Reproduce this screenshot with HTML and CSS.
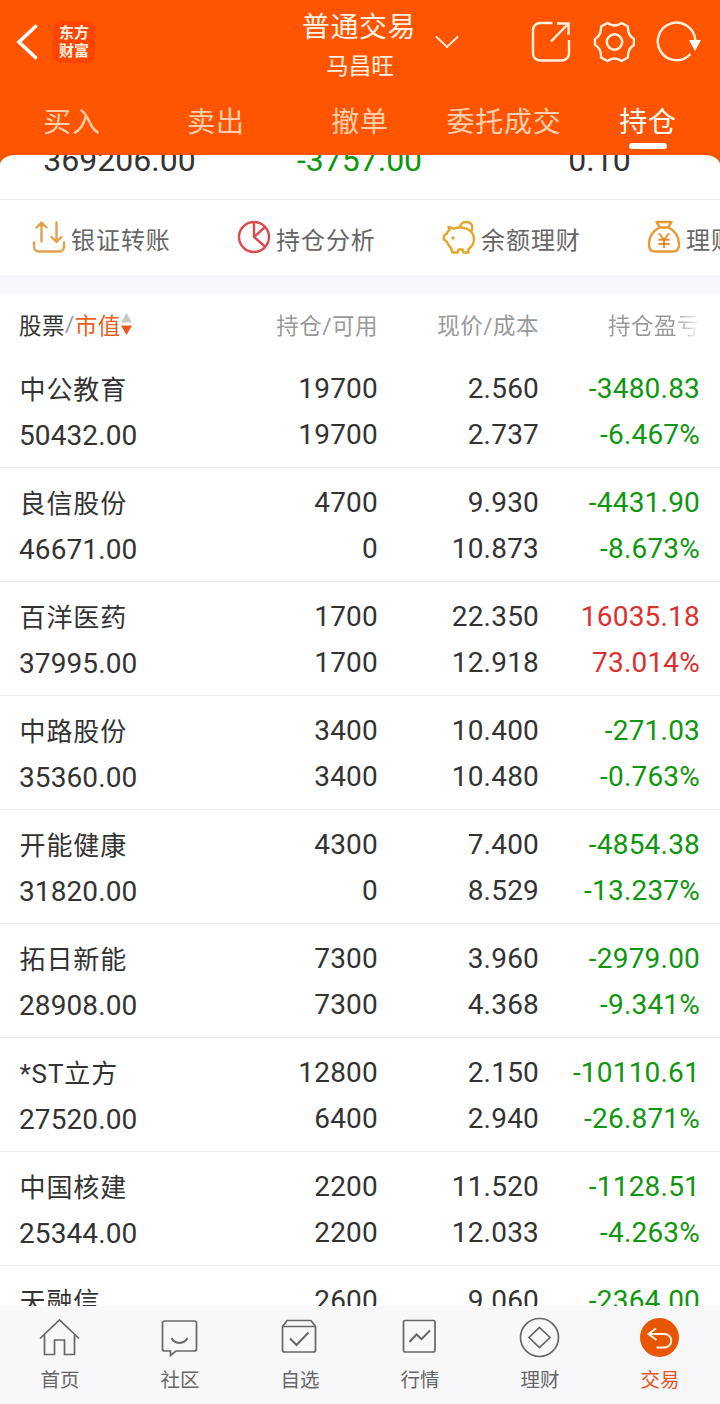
FILE: index.html
```
<!DOCTYPE html>
<html lang="zh-CN">
<head>
    <meta charset="UTF-8">
    <meta name="viewport" content="width=device-width, initial-scale=1.0">
    <title>普通交易 - 持仓</title>
    <link rel="stylesheet" href="styles.css">
</head>
<body>
<div class="app">

    <header class="header">
        <div class="topbar">
            <div class="topbar-left">
                <svg class="back" width="22" height="36" viewBox="0 0 22 36"><path d="M19.500 2.500L3 18l16.500 15.500" fill="none" stroke="#fff" stroke-width="3.600" stroke-linecap="round"/></svg>
                <div class="logo">东方<br>财富</div>
            </div>
            <div class="account">
                <div class="account-type">普通交易</div>
                <div class="account-name">马昌旺</div>
            </div>
            <div class="topbar-right">
                <svg class="arrow-down" width="24" height="14" viewBox="0 0 24 14"><path d="M1 1.500l11 10.500L23 1.500" fill="none" stroke="#fff0e0" stroke-width="1.800"/></svg>
                <div class="tools">
                    <svg width="42" height="42" viewBox="0 0 42 42" fill="none" stroke="#fff3e4" stroke-width="2.400">
                        <path d="M22.500 2H10a7 7 0 0 0-7 7v23.500a7 7 0 0 0 7 7h22a7 7 0 0 0 7-7V19"/>
                        <path d="M21 20.500L37.500 3.500M27 2.500h11.500v11.500"/>
                    </svg>
                    <svg width="42" height="42" viewBox="0 0 42 42" fill="none" stroke="#fff3e4" stroke-width="2.400" stroke-linejoin="round">
                        <path d="M14.500 2Q21.500 7 28.500 2L35 5.500Q34.500 14.500 41 18V24Q34.500 27.500 35 36.500L28.500 40Q21.500 35 14.500 40L8 36.500Q8.500 27.500 2 24V18Q8.500 14.500 8 5.500Z"/>
                        <circle cx="21.500" cy="21" r="7.700"/>
                    </svg>
                    <svg width="46" height="42" viewBox="0 0 46 42" fill="none">
                        <path d="M34.500 33A18.800 18.800 0 1 1 39.300 19" stroke="#fff3e4" stroke-width="2.400"/>
                        <path d="M33 19h12l-6 11z" fill="#fff"/>
                    </svg>
                </div>
            </div>
        </div>
        <nav class="tabs">
            <a class="tab">买入</a>
            <a class="tab">卖出</a>
            <a class="tab">撤单</a>
            <a class="tab">委托成交</a>
            <a class="tab active">持仓</a>
        </nav>
    </header>

    <main class="content">
        <div class="sheet">
            <section class="summary">
                <span>369206.00</span>
                <span class="down">-3757.00</span>
                <span>0.10</span>
            </section>

            <section class="shortcuts">
                <div class="shortcut">
                    <svg width="34" height="34" viewBox="0 0 34 34" fill="none" stroke="#e3a04a" stroke-width="2.400" stroke-linecap="round" stroke-linejoin="round">
                        <path d="M9.500 21.500V3M4.500 7.500L9.500 2.500l5 5M24.500 2.500v19M19.500 17l5 5 5-5"/>
                        <path d="M2 22.500v4a5 5 0 0 0 5 5h20a5 5 0 0 0 5-5v-4"/>
                    </svg>
                    <span>银证转账</span>
                </div>
                <div class="shortcut">
                    <svg width="34" height="34" viewBox="0 0 34 34" fill="none" stroke="#d84c50" stroke-width="2.400">
                        <circle cx="17" cy="17" r="15"/>
                        <path d="M17 2v15l11 9.500M17 17L28 7"/>
                    </svg>
                    <span>持仓分析</span>
                </div>
                <div class="shortcut">
                    <svg width="34" height="34" viewBox="0 0 34 34" fill="none" stroke="#e2a52b" stroke-width="2.400" stroke-linejoin="round">
                        <path d="M6.500 7l5 1.700c4-1.200 10-1.500 14 .3 4 2.300 6.500 6 6.500 10 0 4-2 7.500-5.500 10v3.500h-5l-1-3h-4l-1 3h-5l-1.500-4.500C7 26 5.500 23.500 4.500 21.500L2 19.500v-4L4.500 14c.5-1.500 1.500-3 3-4z"/>
                        <path d="M18 7.500c.5-7 11-7.500 12.300-.5.400 2-.3 3.500-1.300 4.500"/>
                        <circle cx="11" cy="18" r="1.700" fill="#e2a52b" stroke="none"/>
                    </svg>
                    <span>余额理财</span>
                </div>
                <div class="shortcut">
                    <svg width="34" height="34" viewBox="0 0 34 34" fill="none" stroke="#e69a35" stroke-width="2.400" stroke-linejoin="round">
                        <path d="M9.500 2h15l-3.500 5.500h-8z"/>
                        <path d="M12.500 7.500C5.500 11 2 17 2 24.500 2 29.500 4 31.500 8 31.500h18c4 0 6-2 6-7C32 17 28.500 11 21.500 7.500"/>
                        <path d="M12 13.500l5 6 5-6M17 19.500v8.500M11.500 19.800h11M11.500 24h11" stroke="#e88928" stroke-width="1.900"/>
                    </svg>
                    <span>理财</span>
                </div>
            </section>
        </div>

        <section class="positions">
            <div class="table-head">
                <div class="sort">
                    <span>股票</span><i>/</i><span class="sort-on">市值</span>
                    <svg width="11" height="22" viewBox="0 0 11 22"><path d="M5.500 0L11 9.500H0z" fill="#c8c8c8"/><path d="M0 12.500h11L5.500 22z" fill="#ea5a1a"/></svg>
                </div>
                <div>持仓/可用</div>
                <div>现价/成本</div>
                <div><span class="fade">持仓盈亏</span></div>
            </div>

            <div class="row">
                <div class="stock"><b>中公教育</b><span>50432.00</span></div>
                <div><span>19700</span><span>19700</span></div>
                <div><span>2.560</span><span>2.737</span></div>
                <div class="down"><span>-3480.83</span><span>-6.467%</span></div>
            </div>
            <div class="row">
                <div class="stock"><b>良信股份</b><span>46671.00</span></div>
                <div><span>4700</span><span>0</span></div>
                <div><span>9.930</span><span>10.873</span></div>
                <div class="down"><span>-4431.90</span><span>-8.673%</span></div>
            </div>
            <div class="row">
                <div class="stock"><b>百洋医药</b><span>37995.00</span></div>
                <div><span>1700</span><span>1700</span></div>
                <div><span>22.350</span><span>12.918</span></div>
                <div class="up"><span>16035.18</span><span>73.014%</span></div>
            </div>
            <div class="row">
                <div class="stock"><b>中路股份</b><span>35360.00</span></div>
                <div><span>3400</span><span>3400</span></div>
                <div><span>10.400</span><span>10.480</span></div>
                <div class="down"><span>-271.03</span><span>-0.763%</span></div>
            </div>
            <div class="row">
                <div class="stock"><b>开能健康</b><span>31820.00</span></div>
                <div><span>4300</span><span>0</span></div>
                <div><span>7.400</span><span>8.529</span></div>
                <div class="down"><span>-4854.38</span><span>-13.237%</span></div>
            </div>
            <div class="row">
                <div class="stock"><b>拓日新能</b><span>28908.00</span></div>
                <div><span>7300</span><span>7300</span></div>
                <div><span>3.960</span><span>4.368</span></div>
                <div class="down"><span>-2979.00</span><span>-9.341%</span></div>
            </div>
            <div class="row">
                <div class="stock"><b>*ST立方</b><span>27520.00</span></div>
                <div><span>12800</span><span>6400</span></div>
                <div><span>2.150</span><span>2.940</span></div>
                <div class="down"><span>-10110.61</span><span>-26.871%</span></div>
            </div>
            <div class="row">
                <div class="stock"><b>中国核建</b><span>25344.00</span></div>
                <div><span>2200</span><span>2200</span></div>
                <div><span>11.520</span><span>12.033</span></div>
                <div class="down"><span>-1128.51</span><span>-4.263%</span></div>
            </div>
            <div class="row">
                <div class="stock"><b>天融信</b></div>
                <div><span>2600</span></div>
                <div><span>9.060</span></div>
                <div class="down"><span>-2364.00</span></div>
            </div>
        </section>
    </main>

    <footer class="navbar">
        <a class="nav-item">
            <svg width="42" height="42" viewBox="0 0 42 42"><path d="M1 21.500L20.500 3 40 21.500M5.500 18v19.500h10v-14.500h10v14.500h10V18"/></svg>
            <span>首页</span>
        </a>
        <a class="nav-item">
            <svg width="42" height="42" viewBox="0 0 42 42"><path d="M5.500 4h30a2 2 0 0 1 2 2v26a2 2 0 0 1-2 2H17l-5.500 4.500V34H5.500a2 2 0 0 1-2-2V6a2 2 0 0 1 2-2z"/><path d="M12.500 21c3.500 6.500 12.500 6.500 16 0" stroke-width="2"/></svg>
            <span>社区</span>
        </a>
        <a class="nav-item">
            <svg width="42" height="42" viewBox="0 0 42 42"><path d="M3.500 9.500L8 3.500h24L36.500 9.500V33a2 2 0 0 1-2 2H5.500a2 2 0 0 1-2-2zM3.500 9.500h33"/><path d="M11 21.500l6.500 6.500 12-12.500" stroke-width="2"/></svg>
            <span>自选</span>
        </a>
        <a class="nav-item">
            <svg width="42" height="42" viewBox="0 0 42 42"><rect x="4.500" y="3.500" width="31.500" height="31.500" rx="1.500"/><path d="M10.500 25l7-7.500 5 4.500 8.500-8.500" stroke-width="2"/></svg>
            <span>行情</span>
        </a>
        <a class="nav-item">
            <svg width="42" height="42" viewBox="0 0 42 42"><circle cx="20.500" cy="20.500" r="19"/><path d="M20.500 10.500l10.500 10-10.500 10-10.500-10z"/></svg>
            <span>理财</span>
        </a>
        <a class="nav-item current">
            <svg width="42" height="42" viewBox="0 0 42 42"><circle cx="20.500" cy="20.500" r="19.500" fill="#e85600" stroke="none"/><path d="M17 11.500L9.500 17l8 6M10 17h15.500a6.500 6.500 0 0 1 0 13.500H17.500" stroke="#fff3e4" stroke-width="2"/></svg>
            <span>交易</span>
        </a>
    </footer>

</div>
</body>
</html>
```
FILE: styles.css
```
* {
    box-sizing: border-box;
}

body {
    margin: 0;
    background-color: #fff;
    color: #333;
    font-family: Roboto, "Noto Sans CJK SC", sans-serif;
}

svg {
    display: block;
    flex: none;
}

.app {
    display: flex;
    flex-direction: column;
    width: 720px;
    height: 1404px;
    overflow: hidden;
}

/* header */
.header {
    flex: none;
    height: 155px;
    background-color: #ff5500;
    color: #fff3e4;
}

.topbar {
    display: grid;
    grid-template-columns: 240px 240px 240px;
    height: 88px;
}

.topbar-left {
    display: flex;
    align-items: center;
    gap: 15px;
    height: 84px;
    padding-left: 16px;
}

.logo {
    width: 42px;
    height: 42px;
    padding-top: 3px;
    border-radius: 8px;
    background-color: #ff4500;
    font-size: 15px;
    font-weight: bold;
    line-height: 18px;
    text-align: center;
}

.account {
    text-align: center;
}

.account-type {
    padding-top: 8px;
    padding-right: 2px;
    font-size: 28px;
    line-height: 40px;
    letter-spacing: 0.6px;
}

.account-name {
    padding-top: 2px;
    font-size: 22.500px;
    line-height: 32px;
}

.topbar-right {
    display: flex;
    align-items: center;
    justify-content: space-between;
    height: 84px;
    padding-right: 18px;
}

.arrow-down {
    margin-left: -45px;
}

.tools {
    display: flex;
    gap: 21px;
}

.tabs {
    display: grid;
    grid-template-columns: repeat(5, 1fr);
}

.tab {
    display: flex;
    flex-direction: column;
    align-items: center;
    height: 67px;
    padding-top: 15px;
    color: #ffd0ae;
    font-size: 28px;
    line-height: 40px;
    letter-spacing: 0.7px;
}

.tab.active {
    color: #fff;
}

.tab.active::after {
    content: "";
    width: 38px;
    height: 6px;
    border-radius: 3px;
    background-color: #fff;
}

/* content */
.content {
    flex: 1;
    min-height: 0;
    overflow: hidden;
    background: linear-gradient(#f25405 12px, #fff 12px);
}

.sheet {
    overflow: hidden;
    border-radius: 15px 15px 0 0 / 10px 10px 0 0;
    background-color: #fff;
}

.summary {
    display: grid;
    grid-template-columns: repeat(3, 1fr);
    height: 45px;
    border-bottom: 1px solid #e9e9e9;
    font-size: 32px;
    line-height: 40px;
    text-align: center;
}

.summary span {
    margin-top: -15px;
    padding-right: 1px;
}

.shortcuts {
    display: flex;
    height: 75px;
    padding-left: 32px;
    overflow: hidden;
    color: #666;
}

.shortcut {
    display: flex;
    flex: none;
    align-items: center;
    gap: 5px;
    width: 205px;
    padding-bottom: 1px;
    font-size: 24px;
    letter-spacing: 0.95px;
    white-space: nowrap;
}

.shortcut span {
    padding-top: 3px;
}

.positions {
    border-top: 19px solid #f6f7fa;
}

.table-head,
.row {
    display: grid;
    grid-template-columns: 181px 178px 161px 161px;
    padding: 0 20px 0 19px;
    text-align: right;
}

.table-head {
    align-items: center;
    height: 60px;
    color: #999;
    font-size: 22.500px;
    letter-spacing: 0.5px;
}

.sort {
    display: flex;
    align-items: center;
    color: #333;
}

.sort i {
    color: #999;
    font-style: normal;
}

.sort .sort-on {
    color: #e8601c;
}

.fade {
    background: linear-gradient(to right, #999 72%, #fff);
    background-clip: text;
    -webkit-background-clip: text;
    color: transparent;
}

.row {
    height: 114px;
    padding-top: 12px;
    border-bottom: 1px solid #ebebeb;
    font-size: 28px;
    line-height: 46px;
    letter-spacing: 0.2px;
}

.row span,
.row b {
    display: block;
}

.stock {
    padding-top: 1px;
    letter-spacing: 0.1px;
    text-align: left;
}

.stock b {
    height: 46px;
    padding-left: 0.5px;
    font-size: 26px;
    font-weight: normal;
    letter-spacing: 0.9px;
}

.down {
    color: #0f960f;
}

.up {
    color: #dc2f2f;
}

/* bottom navigation */
.navbar {
    display: grid;
    flex: none;
    grid-template-columns: repeat(6, 1fr);
    height: 98px;
    background-color: #f8f8fa;
}

.nav-item {
    display: flex;
    flex-direction: column;
    align-items: center;
    padding-top: 11px;
    color: #666;
    font-size: 19.500px;
    line-height: 28px;
}

.nav-item svg {
    margin-bottom: 8px;
    fill: none;
    stroke: #666;
    stroke-width: 1.700px;
}

.nav-item.current {
    color: #e2571a;
}
```
